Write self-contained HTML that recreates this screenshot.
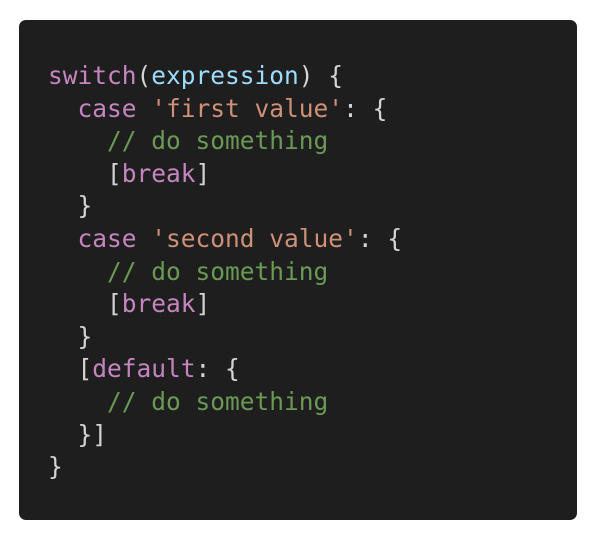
<!DOCTYPE html>
<html><head><style>
html,body{margin:0;padding:0;background:#fff;width:592px;height:538px;overflow:hidden}
.p{position:absolute;left:19px;top:20px;width:558px;height:500px;background:#1e1e1e;border-radius:7px}
pre{position:absolute;left:48px;top:60px;margin:0;font-family:"DejaVu Sans Mono","Liberation Mono",monospace;font-size:24.5px;line-height:32.6px;color:#d4d4d4}
.k{color:#c586c0}.v{color:#9cdcfe}.s{color:#ce9178}.c{color:#6a9955}
</style></head><body>
<div class="p"></div>
<pre><span class="k">switch</span>(<span class="v">expression</span>) {
  <span class="k">case</span> <span class="s">'first value'</span>: {
    <span class="c">// do something</span>
    [<span class="k">break</span>]
  }
  <span class="k">case</span> <span class="s">'second value'</span>: {
    <span class="c">// do something</span>
    [<span class="k">break</span>]
  }
  [<span class="k">default</span>: {
    <span class="c">// do something</span>
  }]
}</pre>
</body></html>
